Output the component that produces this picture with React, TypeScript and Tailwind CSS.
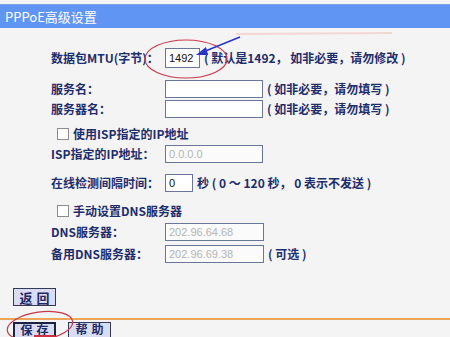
const font = "font-['SimSun','Noto_Sans_CJK_SC',sans-serif]";

function Field({
  label,
  width,
  value,
  disabled,
  note,
  className = "",
}: {
  label: string;
  width: string;
  value?: string;
  disabled?: boolean;
  note?: string;
  className?: string;
}) {
  return (
    <div className={`flex items-center h-[18px] ${className}`}>
      <span className="w-[114px] shrink-0 whitespace-nowrap">{label}</span>
      <div
        className={`${width} h-full shrink-0 border border-[#6a7698] flex items-center px-[3px] text-[11px] font-normal font-['Liberation_Sans',sans-serif] ${
          disabled ? "bg-[#fbfbfb] text-[#b4b4b4]" : "bg-white text-[#111]"
        }`}
      >
        {value}
      </div>
      {note && <span className="ml-[4px] whitespace-nowrap">{note}</span>}
    </div>
  );
}

function Check({ label, className = "" }: { label: string; className?: string }) {
  return (
    <div className={`flex items-center h-[14px] pl-[6px] ${className}`}>
      <span className="w-[12px] h-[12px] border border-[#8c8c8c] bg-white shrink-0" />
      <span className="ml-[4px] whitespace-nowrap">{label}</span>
    </div>
  );
}

function Btn({ children, focus, short }: { children: string; focus?: boolean; short?: boolean }) {
  return (
    <div
      className={`w-[43px] bg-[#d9dcf2] flex justify-center whitespace-nowrap tracking-[4px] pl-[4px] text-[#1d2a66] ${
        short ? "h-[15px] items-start text-[12px] leading-[12px]" : "h-[18px] items-center text-[13px]"
      } ${focus ? "border-2 border-[#1b2340] border-b-0" : short ? "border border-[#333a55] border-b-0" : "border border-[#333a55]"}`}
    >
      {children}
    </div>
  );
}

export default function App() {
  return (
    <div
      className={`relative w-[450px] h-[337px] overflow-hidden bg-[#f4f4f4] text-[12px] leading-none text-[#1e2d6c] font-semibold ${font}`}
    >
      <div className="mt-[4px] h-[24px] bg-[#6195f4] border-t border-[#7f9fde] flex items-center pl-[5px] text-white font-normal text-[13px]">
        PPPoE高级设置
      </div>

      <div className="pl-[51px]">
        <Field
          className="mt-[20px] h-[20px]"
          label="数据包MTU(字节)："
          width="w-[35px]"
          value="1492"
          note="( 默认是1492， 如非必要，请勿修改 )"
        />
        <Field className="mt-[12px]" label="服务名：" width="w-[98px]" note="( 如非必要，请勿填写 )" />
        <Field className="mt-[2px]" label="服务器名：" width="w-[98px]" note="( 如非必要，请勿填写 )" />
        <Check className="mt-[9px]" label="使用ISP指定的IP地址" />
        <Field className="mt-[4px]" label="ISP指定的IP地址：" width="w-[98px]" value="0.0.0.0" disabled />
        <Field
          className="mt-[11px]"
          label="在线检测间隔时间："
          width="w-[28px]"
          value="0"
          note="秒 ( 0 ～ 120 秒， 0 表示不发送 )"
        />
        <Check className="mt-[12px]" label="手动设置DNS服务器" />
        <Field className="mt-[5px]" label="DNS服务器：" width="w-[99px]" value="202.96.64.68" disabled />
        <Field
          className="mt-[4px]"
          label="备用DNS服务器："
          width="w-[99px]"
          value="202.96.69.38"
          disabled
          note="( 可选 )"
        />
      </div>

      <div className="pl-[13px] mt-[25px]">
        <Btn>返回</Btn>
      </div>
      <div className="mt-[12px] h-[2px] bg-[#eea55a]" />
      <div className="mt-[2px] pl-[13px] flex gap-[12px]">
        <Btn focus short>
          保存
        </Btn>
        <Btn short>帮助</Btn>
      </div>

      <svg className="absolute inset-0 pointer-events-none" width="450" height="337">
        <line x1="236" y1="34" x2="392" y2="33" stroke="#f3d6d6" strokeWidth="2" />
        <ellipse cx="186" cy="59" rx="41" ry="19" fill="none" stroke="#c43a4a" strokeWidth="1.2" />
        <line x1="240" y1="37" x2="203" y2="52" stroke="#2634c8" strokeWidth="1.4" />
        <polygon points="196,55 206,47 208,55" fill="#2634c8" />
        <ellipse
          cx="40"
          cy="326"
          rx="33"
          ry="14"
          fill="none"
          stroke="#c43a4a"
          strokeWidth="1.2"
          transform="rotate(-8 40 326)"
        />
        <line x1="34" y1="336" x2="55" y2="336" stroke="#d03040" strokeWidth="2" />
      </svg>
    </div>
  );
}
